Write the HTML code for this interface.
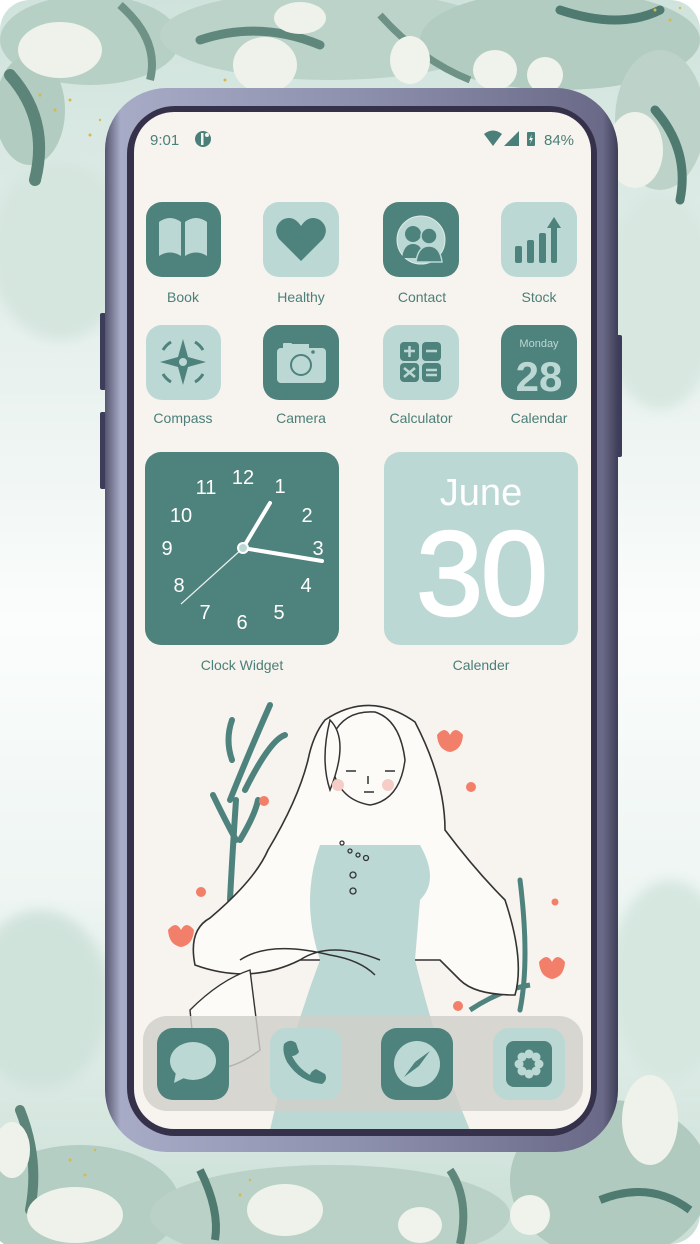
<!DOCTYPE html>
<html><head><meta charset="utf-8"><style>
html,body{margin:0;padding:0;background:#fff;}
body{width:700px;height:1244px;overflow:hidden;position:relative;font-family:"Liberation Sans",sans-serif;}
svg{position:absolute;left:0;top:0;}
</style></head><body>
<svg width="700" height="1244" viewBox="0 0 700 1244" xmlns="http://www.w3.org/2000/svg" font-family="Liberation Sans, sans-serif">
<defs>
<linearGradient id="bg" x1="0" y1="0" x2="0" y2="1">
<stop offset="0" stop-color="#cfe3dc"/><stop offset="0.22" stop-color="#e2ede9"/><stop offset="0.5" stop-color="#fbfdfc"/><stop offset="0.72" stop-color="#eef5f2"/><stop offset="1" stop-color="#c9dfd6"/>
</linearGradient>
<linearGradient id="frame" x1="0" y1="0" x2="1" y2="0">
<stop offset="0" stop-color="#55556f"/><stop offset="0.03" stop-color="#a7abc6"/><stop offset="0.5" stop-color="#8d90ad"/><stop offset="0.97" stop-color="#6a6a88"/><stop offset="1" stop-color="#3f3e58"/>
</linearGradient>
<filter id="blur"><feGaussianBlur stdDeviation="6"/></filter>
<clipPath id="scr"><rect x="134" y="112" width="457" height="1017" rx="40"/></clipPath>
</defs>
<rect x="0" y="0" width="700" height="1244" rx="30" fill="url(#bg)"/>
<g filter="url(#blur)">
<ellipse cx="60" cy="250" rx="70" ry="90" fill="#d5e6df"/>
<ellipse cx="660" cy="300" rx="60" ry="110" fill="#d8e8e1"/>
<ellipse cx="40" cy="1000" rx="70" ry="90" fill="#d0e3db"/>
<ellipse cx="670" cy="980" rx="60" ry="100" fill="#d6e7e0"/>
</g>
<!-- top foliage -->
<g>
<ellipse cx="90" cy="40" rx="90" ry="45" fill="#b7d0c6"/>
<ellipse cx="330" cy="35" rx="170" ry="45" fill="#bcd3c9"/>
<ellipse cx="560" cy="40" rx="140" ry="50" fill="#b2ccc1"/>
<ellipse cx="660" cy="120" rx="45" ry="70" fill="#bdd3ca"/>
<ellipse cx="30" cy="110" rx="35" ry="55" fill="#b2ccc1"/>
<path d="M10 75 Q50 120 35 180" stroke="#5c8479" stroke-width="12" fill="none" stroke-linecap="round"/>
<path d="M120 5 Q160 40 150 80" stroke="#6f9287" stroke-width="8" fill="none"/>
<path d="M200 40 Q260 20 320 45" stroke="#5f877c" stroke-width="9" fill="none" stroke-linecap="round"/>
<path d="M380 15 Q420 60 470 80" stroke="#6f9287" stroke-width="7" fill="none"/>
<path d="M560 10 Q620 30 660 10" stroke="#4f7a70" stroke-width="9" fill="none" stroke-linecap="round"/>
<path d="M655 110 Q690 150 680 200" stroke="#4f7a70" stroke-width="9" fill="none" stroke-linecap="round"/>
<ellipse cx="60" cy="50" rx="42" ry="28" fill="#eef2ea"/>
<ellipse cx="265" cy="65" rx="32" ry="28" fill="#eef2ea"/>
<ellipse cx="300" cy="18" rx="26" ry="16" fill="#eef2ea"/>
<ellipse cx="410" cy="60" rx="20" ry="24" fill="#f0f3ec"/>
<ellipse cx="495" cy="70" rx="22" ry="20" fill="#f0f3ec"/>
<ellipse cx="545" cy="75" rx="18" ry="18" fill="#f0f3ec"/>
<ellipse cx="635" cy="150" rx="28" ry="38" fill="#eef2ea"/>
<g fill="#d8b84a"><circle cx="40" cy="95" r="1.5"/><circle cx="55" cy="110" r="1.5"/><circle cx="70" cy="100" r="1.5"/><circle cx="100" cy="120" r="1.2"/><circle cx="90" cy="135" r="1.5"/><circle cx="225" cy="80" r="1.5"/><circle cx="230" cy="95" r="1.2"/><circle cx="655" cy="10" r="1.5"/><circle cx="670" cy="20" r="1.5"/><circle cx="680" cy="8" r="1.2"/></g>
</g>
<!-- bottom foliage -->
<g>
<ellipse cx="80" cy="1205" rx="100" ry="60" fill="#b4cec3"/>
<ellipse cx="330" cy="1215" rx="180" ry="50" fill="#b9d1c7"/>
<ellipse cx="610" cy="1180" rx="100" ry="80" fill="#b0cabf"/>
<path d="M20 1110 Q40 1160 30 1210" stroke="#5c8479" stroke-width="10" fill="none" stroke-linecap="round"/>
<path d="M200 1170 Q220 1210 215 1240" stroke="#4f7a70" stroke-width="8" fill="none"/>
<path d="M450 1170 Q470 1200 460 1244" stroke="#5f877c" stroke-width="8" fill="none"/>
<path d="M600 1200 Q650 1180 690 1210" stroke="#4f7a70" stroke-width="8" fill="none"/>
<ellipse cx="75" cy="1215" rx="48" ry="28" fill="#eef2ea"/>
<ellipse cx="285" cy="1210" rx="38" ry="26" fill="#eef2ea"/>
<ellipse cx="420" cy="1225" rx="22" ry="18" fill="#f0f3ec"/>
<ellipse cx="530" cy="1215" rx="20" ry="20" fill="#f0f3ec"/>
<ellipse cx="650" cy="1120" rx="28" ry="45" fill="#eef2ea"/>
<ellipse cx="12" cy="1150" rx="18" ry="28" fill="#eef2ea"/>
<g fill="#d8b84a"><circle cx="70" cy="1160" r="1.5"/><circle cx="85" cy="1175" r="1.5"/><circle cx="95" cy="1150" r="1.2"/><circle cx="240" cy="1195" r="1.5"/><circle cx="250" cy="1180" r="1.2"/></g>
</g>
<!-- side buttons -->
<rect x="100" y="313" width="6" height="77" rx="2" fill="#3d3c5a"/>
<rect x="100" y="412" width="6" height="77" rx="2" fill="#3d3c5a"/>
<rect x="616" y="335" width="6" height="122" rx="2" fill="#3d3c5a"/>
<!-- frame -->
<rect x="105" y="88" width="513" height="1064" rx="62" fill="url(#frame)"/>
<rect x="127" y="106" width="470" height="1030" rx="48" fill="#36314a"/>
<rect x="134" y="112" width="457" height="1017" rx="40" fill="#f7f3ee"/>
<g clip-path="url(#scr)">
<!-- status bar -->
<text x="150" y="145" font-size="15" fill="#4b7f79">9:01</text>
<circle cx="203" cy="139" r="8" fill="#4b7f79"/><rect x="201" y="133" width="2.5" height="12" fill="#f7f3ee"/><circle cx="207" cy="135" r="2" fill="#f7f3ee"/>
<path d="M484 134 Q493 127 502 134 L493 146 Z" fill="#4b7f79"/>
<path d="M519 131 L519 146 L504 146 Z" fill="#4b7f79"/>
<rect x="527" y="132" width="8" height="14" rx="1" fill="#4b7f79"/><path d="M532 134 L529 140 L531 140 L530 144 L533 138 L531 138 Z" fill="#f7f3ee"/>
<text x="544" y="145" font-size="15" fill="#4b7f79">84%</text>
<!-- row 1 icons -->
<rect x="146" y="202" width="75" height="75" rx="16" fill="#4e827c"/>
<path d="M159 222 Q170 214 181 222 L181 256 Q170 249 159 256 Z M185 222 Q196 214 207 222 L207 256 Q196 249 185 256 Z" fill="#bcd8d4"/>
<rect x="263" y="202" width="76" height="75" rx="16" fill="#bcd8d4"/>
<path d="M301 261 L279 239 Q272 228 282 220 Q293 214 301 226 Q309 214 320 220 Q330 228 323 239 Z" fill="#4e827c"/>
<rect x="383" y="202" width="76" height="75" rx="16" fill="#4e827c"/>
<circle cx="421" cy="240" r="24" fill="#bcd8d4"/>
<circle cx="421" cy="240" r="24" fill="none" stroke="#e0ecea" stroke-width="1"/>
<circle cx="413" cy="234" r="8" fill="#4e827c"/><path d="M402 258 Q404 244 413 244 Q422 244 424 258 Z" fill="#4e827c"/>
<circle cx="429" cy="236" r="8" fill="#4e827c" stroke="#bcd8d4" stroke-width="1.5"/><path d="M416 262 Q418 246 429 246 Q440 246 442 262 Z" fill="#4e827c" stroke="#bcd8d4" stroke-width="1.5"/>
<rect x="501" y="202" width="76" height="75" rx="16" fill="#bcd8d4"/>
<g fill="#4e827c"><rect x="515" y="246" width="7" height="17" rx="2"/><rect x="527" y="240" width="7" height="23" rx="2"/><rect x="539" y="233" width="7" height="30" rx="2"/><rect x="551" y="226" width="6" height="37" rx="2"/><path d="M547 228 L554 217 L561 228 Z"/></g>
<g font-size="14" fill="#4b7f79" text-anchor="middle">
<text x="183" y="302">Book</text><text x="301" y="302">Healthy</text><text x="422" y="302">Contact</text><text x="539" y="302">Stock</text>
<text x="183" y="423">Compass</text><text x="301" y="423">Camera</text><text x="421" y="423">Calculator</text><text x="539" y="423">Calendar</text>
</g>
<!-- row 2 -->
<rect x="146" y="325" width="75" height="75" rx="16" fill="#bcd8d4"/>
<path d="M183 339 L188 357 L206 362 L188 367 L183 385 L178 367 L160 362 L178 357 Z" fill="#4e827c"/><circle cx="183" cy="362" r="4" fill="#bcd8d4"/>
<g stroke="#4e827c" stroke-width="3" fill="none"><path d="M163 350 A23 23 0 0 1 171 342"/><path d="M195 342 A23 23 0 0 1 203 350"/><path d="M203 374 A23 23 0 0 1 195 382"/><path d="M171 382 A23 23 0 0 1 163 374"/></g>
<rect x="263" y="325" width="76" height="75" rx="16" fill="#4e827c"/>
<rect x="277" y="348" width="49" height="35" rx="4" fill="#bcd8d4"/><rect x="283" y="343" width="9" height="6" rx="1" fill="#bcd8d4"/><rect x="292" y="344" width="17" height="6" fill="#bcd8d4"/>
<circle cx="301" cy="365" r="10" fill="none" stroke="#4e827c" stroke-width="2"/><circle cx="313" cy="352" r="1.8" fill="#4e827c"/>
<rect x="383" y="325" width="76" height="75" rx="16" fill="#bcd8d4"/>
<g fill="#4e827c"><rect x="400" y="342" width="19" height="19" rx="4"/><rect x="422" y="342" width="19" height="19" rx="4"/><rect x="400" y="363" width="19" height="19" rx="4"/><rect x="422" y="363" width="19" height="19" rx="4"/></g>
<g stroke="#bcd8d4" stroke-width="2.5"><path d="M404 351 h11 M409.5 346 v11 M426 351 h11 M404 368 l11 9 M415 368 l-11 9 M426 370 h11 M426 375 h11"/></g>
<rect x="501" y="325" width="76" height="75" rx="16" fill="#4e827c"/>
<text x="539" y="347" font-size="11" fill="#bcd8d4" text-anchor="middle">Monday</text>
<text x="539" y="391" font-size="42" font-weight="bold" fill="#bcd8d4" text-anchor="middle">28</text>
<!-- clock -->
<rect x="145" y="452" width="194" height="193" rx="16" fill="#4e827c"/>
<g font-size="20" fill="#fff" text-anchor="middle">
<text x="243" y="484">12</text><text x="280" y="493">1</text><text x="307" y="522">2</text><text x="318" y="555">3</text><text x="306" y="592">4</text><text x="279" y="619">5</text><text x="242" y="629">6</text><text x="205" y="619">7</text><text x="179" y="592">8</text><text x="167" y="555">9</text><text x="181" y="522">10</text><text x="206" y="494">11</text>
</g>
<line x1="243" y1="548" x2="270" y2="503" stroke="#fff" stroke-width="4" stroke-linecap="round"/>
<line x1="243" y1="548" x2="322" y2="561" stroke="#fff" stroke-width="4" stroke-linecap="round"/>
<line x1="243" y1="548" x2="181" y2="604" stroke="#e8f0ee" stroke-width="1.2"/>
<circle cx="243" cy="548" r="5" fill="#bcd8d4" stroke="#fff" stroke-width="2"/>
<!-- calendar widget -->
<rect x="384" y="452" width="194" height="193" rx="16" fill="#bcd8d4"/>
<text x="481" y="505" font-size="38" fill="#fff" text-anchor="middle">June</text>
<text x="481" y="615" font-size="120" fill="#fff" stroke="#fff" stroke-width="2.5" text-anchor="middle" letter-spacing="-2">30</text>
<g font-size="14" fill="#4b7f79" text-anchor="middle"><text x="242" y="670">Clock Widget</text><text x="481" y="670">Calender</text></g>
<!-- illustration -->
<g>
<path d="M230 800 Q250 750 270 705 M245 790 Q270 740 285 735 M232 760 Q225 740 232 720 M236 840 Q225 820 213 795 M240 840 Q255 815 258 800 M230 900 Q232 860 236 800" stroke="#4e827c" stroke-width="6" fill="none" stroke-linecap="round"/>
<path d="M520 1010 Q530 960 520 880 M515 980 Q500 940 490 900" stroke="#4e827c" stroke-width="5" fill="none" stroke-linecap="round"/>
<path d="M470 1010 Q500 990 530 985" stroke="#4e827c" stroke-width="5" fill="none"/>
<!-- hair back -->
<path d="M325 720 Q370 690 415 722 Q445 780 445 830 Q475 870 505 900 Q525 960 515 995 Q475 995 460 980 L440 960 L300 960 Q250 985 195 965 Q188 930 210 918 Q255 880 268 850 Q298 800 308 760 Q313 735 325 720 Z" fill="#fdfbf8" stroke="#333" stroke-width="1.6"/>
<!-- dress -->
<path d="M320 845 L420 845 Q440 880 420 900 L415 960 Q440 1060 470 1130 L270 1130 Q290 1040 320 960 Q300 900 320 845 Z" fill="#bcd8d4"/>
<path d="M300 960 Q330 940 380 960" stroke="#333" stroke-width="1.5" fill="none"/>
<!-- face -->
<path d="M333 735 Q345 710 375 712 Q400 720 405 760 Q400 800 370 805 Q340 800 333 770 Z" fill="#fdfbf8" stroke="#333" stroke-width="1.5"/>
<path d="M330 720 Q350 740 330 790 Q320 760 330 720 Z" fill="#fdfbf8" stroke="#333" stroke-width="1.5"/>
<path d="M346 771 h10 M385 771 h10 M364 792 h10 M368 776 v8" stroke="#333" stroke-width="1.5"/>
<circle cx="338" cy="785" r="6" fill="#f6cdc6"/><circle cx="388" cy="785" r="6" fill="#f6cdc6"/>
<g fill="none" stroke="#333" stroke-width="1.3"><circle cx="342" cy="843" r="2"/><circle cx="350" cy="851" r="2"/><circle cx="358" cy="855" r="2"/><circle cx="366" cy="858" r="2.5"/><circle cx="353" cy="875" r="3"/><circle cx="353" cy="891" r="3"/></g>
<path d="M240 960 Q270 940 330 955 Q360 960 375 975" stroke="#333" stroke-width="1.5" fill="none"/>
<path d="M190 1010 Q220 980 250 970 L260 1050 Q220 1080 195 1060 Z" fill="#fdfbf8" stroke="#333" stroke-width="1.4"/>
<!-- flowers -->
<g fill="#f27f6a">
<path d="M437 735 Q445 725 450 735 Q455 725 463 735 Q462 750 450 752 Q438 750 437 735 Z"/>
<path d="M168 930 Q176 920 181 930 Q186 920 194 930 Q193 945 181 947 Q169 945 168 930 Z"/>
<path d="M539 962 Q547 952 552 962 Q557 952 565 962 Q564 977 552 979 Q540 977 539 962 Z"/>
<circle cx="264" cy="801" r="5"/><circle cx="471" cy="787" r="5"/><circle cx="201" cy="892" r="5"/><circle cx="555" cy="902" r="3.5"/><circle cx="458" cy="1006" r="5"/>
</g>
</g>
<!-- dock -->
<rect x="143" y="1016" width="440" height="95" rx="24" fill="#cfcfcb" opacity="0.82"/>
<rect x="157" y="1028" width="72" height="72" rx="16" fill="#4e827c"/>
<ellipse cx="193" cy="1061" rx="23" ry="19" fill="#bcd8d4"/><path d="M176 1072 L174 1083 L186 1077 Z" fill="#bcd8d4"/>
<rect x="270" y="1028" width="72" height="72" rx="16" fill="#bcd8d4"/>
<path d="M284 1044 Q290 1038 296 1043 L299 1052 Q296 1056 292 1056 Q298 1068 310 1075 Q311 1071 316 1069 L325 1074 Q328 1080 322 1084 Q300 1082 287 1062 Q282 1052 284 1044 Z" fill="#4e827c"/>
<rect x="381" y="1028" width="72" height="72" rx="16" fill="#4e827c"/>
<circle cx="417" cy="1064" r="23" fill="#bcd8d4"/>
<path d="M404 1077 L415 1062 L419 1066 Z" fill="#4e827c"/><path d="M430 1051 L419 1066 L415 1062 Z" fill="#4e827c"/>
<rect x="493" y="1028" width="72" height="72" rx="16" fill="#bcd8d4"/>
<rect x="506" y="1041" width="46" height="46" rx="8" fill="#4e827c"/>
<g fill="#bcd8d4"><circle cx="529" cy="1054" r="4.5"/><circle cx="529" cy="1074" r="4.5"/><circle cx="519" cy="1064" r="4.5"/><circle cx="539" cy="1064" r="4.5"/><circle cx="522" cy="1057" r="4.5"/><circle cx="536" cy="1057" r="4.5"/><circle cx="522" cy="1071" r="4.5"/><circle cx="536" cy="1071" r="4.5"/></g>
<circle cx="529" cy="1064" r="2.5" fill="#4e827c"/>
</g>
</svg>
</body></html>
